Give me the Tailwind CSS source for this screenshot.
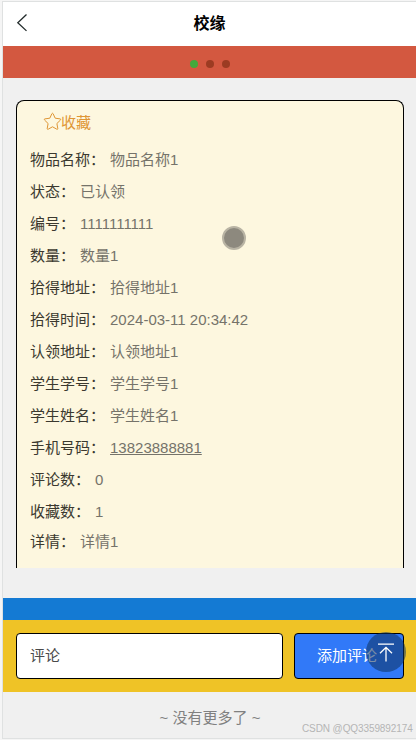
<!DOCTYPE html>
<html lang="zh-CN">
<head>
<meta charset="utf-8">
<title>校缘</title>
<script src="https://cdn.jsdelivr.net/npm/@tailwindcss/browser@4"></script>
</head>
<body class="bg-[#f5f5f5] font-['Liberation_Sans','Noto_Sans_CJK_SC',sans-serif]">
<div class="w-[416px] h-[740px] overflow-hidden pt-px pl-[2px]">
<div class="relative h-[738px] border-t border-l border-b border-[#dfe1e1] bg-[#f0f0f0] flex flex-col text-[15px] leading-8">
  <header class="h-11 shrink-0 bg-white flex items-center">
    <svg class="w-11 h-11" viewBox="0 0 44 44" fill="none" stroke="#222b2b" stroke-width="1.3"><path d="M23.500 12.500 14.800 20.700l8.700 8.200"/></svg>
    <h1 class="flex-1 text-center text-base font-bold text-black">校缘</h1>
    <div class="w-11"></div>
  </header>
  <div class="h-8 shrink-0 bg-[#d35840] flex justify-center items-center gap-2 pt-1">
    <i class="w-2 h-2 rounded-full bg-[#43a83c]"></i>
    <i class="w-2 h-2 rounded-full bg-[#9c3b22]"></i>
    <i class="w-2 h-2 rounded-full bg-[#9c3b22]"></i>
  </div>
  <main class="mt-[22px] ml-[13px] mr-3 h-[468px] shrink-0 border border-b-0 border-black rounded-t-lg bg-[#fdf7df] px-[13px] text-[#75736a]">
    <div class="h-[43px] pl-[13px] flex items-center text-[#df9635]">
      <svg class="w-[19px] h-[19px] -mt-[3px]" viewBox="0 0 19 19" fill="none" stroke="currentColor" stroke-width="1" stroke-linejoin="round"><path d="M8.900 1.700Q9.500.8 10.100 1.700l2.100 4.500 5 .7q1 .3.300 1.100l-3.600 3.500.9 5.100q0 1-1 .6L9.500 14.800l-4.300 2.400q-1 .4-1-.6l.9-5.100L1.500 8q-.7-.8.3-1.100l5-.7z"/></svg>
      <span class="-ml-px">收藏</span>
    </div>
    <div class="flex gap-[5px]"><b class="font-normal text-[#3b392f]">物品名称：</b><span>物品名称1</span></div>
    <div class="flex gap-[5px]"><b class="font-normal text-[#3b392f]">状态：</b><span>已认领</span></div>
    <div class="flex gap-[5px]"><b class="font-normal text-[#3b392f]">编号：</b><span>1111111111</span></div>
    <div class="flex gap-[5px]"><b class="font-normal text-[#3b392f]">数量：</b><span>数量1</span></div>
    <div class="flex gap-[5px]"><b class="font-normal text-[#3b392f]">拾得地址：</b><span>拾得地址1</span></div>
    <div class="flex gap-[5px]"><b class="font-normal text-[#3b392f]">拾得时间：</b><span>2024-03-11 20:34:42</span></div>
    <div class="flex gap-[5px]"><b class="font-normal text-[#3b392f]">认领地址：</b><span>认领地址1</span></div>
    <div class="flex gap-[5px]"><b class="font-normal text-[#3b392f]">学生学号：</b><span>学生学号1</span></div>
    <div class="flex gap-[5px]"><b class="font-normal text-[#3b392f]">学生姓名：</b><span>学生姓名1</span></div>
    <div class="flex gap-[5px]"><b class="font-normal text-[#3b392f]">手机号码：</b><span class="underline">13823888881</span></div>
    <div class="flex gap-[5px]"><b class="font-normal text-[#3b392f]">评论数：</b><span>0</span></div>
    <div class="flex gap-[5px]"><b class="font-normal text-[#3b392f]">收藏数：</b><span>1</span></div>
    <div class="flex gap-[5px] leading-7"><b class="font-normal text-[#3b392f]">详情：</b><span>详情1</span></div>
  </main>
  <div class="mt-[30px] h-[22px] shrink-0 bg-[#147ad3]"></div>
  <div class="h-[72px] shrink-0 bg-[#efc326] pt-[13px] pl-[13px] pr-3 flex">
    <div class="w-[267px] h-[46px] border border-black rounded bg-white px-[13px] leading-[44px] text-[#4a4a4a]">评论</div>
    <div class="ml-[11px] w-[110px] h-[46px] border border-black rounded bg-[#3179f8] pl-[22px] leading-[44px] text-white">添加评论</div>
  </div>
  <footer class="flex-1 pt-[10px] pl-px text-center text-[#808080]">~ 没有更多了 ~</footer>
  <div class="absolute left-[363px] top-[630px] w-10 h-10 rounded-full bg-[#0d315c]/55">
    <svg class="w-10 h-10" viewBox="0 0 40 40" fill="none" stroke="#fff" stroke-width="1.3"><path d="M12 12.200h16M20 29.500V15M14 21.300l6-6 6 6"/></svg>
  </div>
  <div class="absolute left-[219px] top-[224px] w-6 h-6 rounded-full bg-[#8d897e] border-2 border-[#b9b4a4]"></div>
  <div class="absolute left-[299px] top-[718px] text-[10px] leading-[17px] tracking-[-0.1px] whitespace-nowrap text-[#b5b5b5]">CSDN @QQ3359892174</div>
</div>
</div>
</body>
</html>
